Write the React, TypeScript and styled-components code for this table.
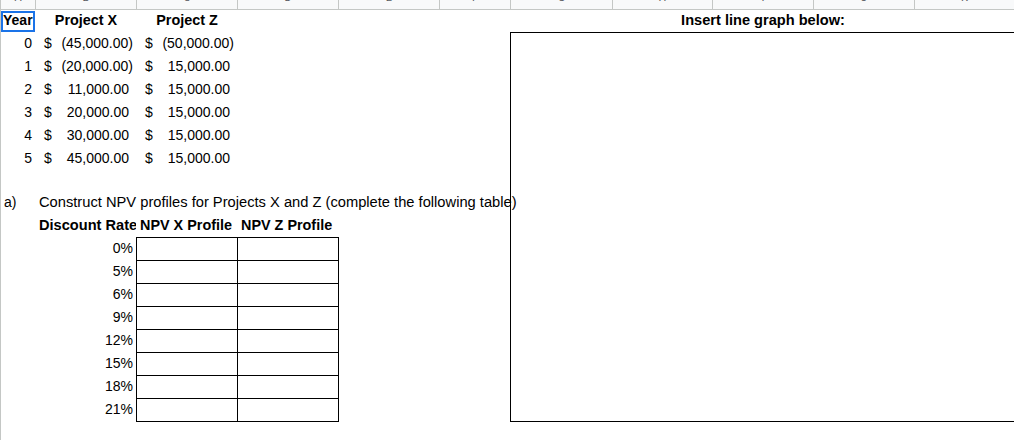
import React from "react";
import styled, { createGlobalStyle, css } from "styled-components";

const GlobalStyle = createGlobalStyle`
  html, body { margin: 0; padding: 0; background: #ffffff; }
  body { font-family: "Liberation Sans", Arial, sans-serif; color: #000; }
`;

const COLS = "34px 101px 101px 101px 101px 71px 102px 100px 101px 101px 100px";
const GRID_LINE = "#c4c7c5";

const Page = styled.div`
  width: 1014px;
  height: 440px;
  overflow: hidden;
  display: flex;
  flex-direction: column;
  background: #fff;
`;

const ColumnHeader = styled.div`
  display: grid;
  grid-template-columns: ${COLS};
  height: 9px;
  flex: none;
  background: #f8f9fa;
  border-bottom: 1px solid ${GRID_LINE};
  border-left: 1px solid ${GRID_LINE};
  overflow: hidden;
`;

const HeaderCell = styled.div<{ $first?: boolean }>`
  display: flex;
  justify-content: center;
  overflow: hidden;
  border-left: ${(p) => (p.$first ? "none" : `1px solid ${GRID_LINE}`)};
`;

const HeaderLabel = styled.span`
  font-family: Roboto, "Liberation Sans", Arial, sans-serif;
  font-size: 11px;
  line-height: 11px;
  margin-top: -8px;
  color: #575a5e;
`;

const Grid = styled.div`
  flex: 1;
  display: grid;
  grid-template-columns: ${COLS};
  grid-template-rows: 22px repeat(6, 23px) 21px repeat(10, 23px) 1fr;
  border-left: 1px solid ${GRID_LINE};
`;

type Align = "left" | "right" | "center";

const Cell = styled.div<{
  $col: string;
  $row: string;
  $align?: Align;
  $bold?: boolean;
  $clip?: boolean;
  $size?: number;
  $padLeft?: number;
}>`
  grid-column: ${(p) => p.$col};
  grid-row: ${(p) => p.$row};
  position: relative;
  display: flex;
  align-items: flex-end;
  justify-content: ${(p) =>
    p.$align === "right" ? "flex-end" : p.$align === "center" ? "center" : "flex-start"};
  padding: 0 3px 3px ${(p) => p.$padLeft ?? 4}px;
  min-width: 0;
  white-space: nowrap;
  font-size: ${(p) => p.$size ?? (p.$bold ? 14.4 : 14)}px;
  line-height: 17px;
  font-weight: ${(p) => (p.$bold ? 700 : 400)};
  overflow: ${(p) => (p.$clip ? "hidden" : "visible")};
  z-index: 1;
`;

const Selection = styled.div`
  position: absolute;
  top: 1px;
  left: 0;
  right: 0;
  bottom: 0;
  border: 2px solid #1a73e8;
  pointer-events: none;
`;

const Money = styled.div<{ $col: string; $row: string }>`
  grid-column: ${(p) => p.$col};
  grid-row: ${(p) => p.$row};
  display: flex;
  align-items: flex-end;
  justify-content: space-between;
  padding: 0 3px 3px 4px;
  font-size: 14px;
  line-height: 17px;
  white-space: nowrap;
`;

const Dollar = styled.span`
  padding-left: 5px;
`;

const Amount = styled.span<{ $negative: boolean }>`
  ${(p) =>
    !p.$negative &&
    css`
      padding-right: 4px;
    `}
`;

const ChartBox = styled.div`
  grid-column: 7 / -1;
  grid-row: 2 / 19;
  margin-bottom: -1px;
  border: 1px solid #000;
  border-right: none;
  background: transparent;
`;

const NpvTable = styled.div`
  grid-column: 3 / 5;
  grid-row: 11 / 19;
  margin-right: -1px;
  margin-bottom: -1px;
  display: grid;
  grid-template-columns: repeat(2, 101px);
  grid-template-rows: repeat(8, 23px);
  border-left: 1px solid #000;
  border-top: 1px solid #000;
  z-index: 2;
`;

const TableCell = styled.div`
  border-right: 1px solid #000;
  border-bottom: 1px solid #000;
  background: #fff;
`;

const columnLetters = ["A", "B", "C", "D", "E", "F", "G", "H", "I", "J", "K"];

const cashFlows: { year: number; x: number; z: number }[] = [
  { year: 0, x: -45000, z: -50000 },
  { year: 1, x: -20000, z: 15000 },
  { year: 2, x: 11000, z: 15000 },
  { year: 3, x: 20000, z: 15000 },
  { year: 4, x: 30000, z: 15000 },
  { year: 5, x: 45000, z: 15000 },
];

const rates = ["0%", "5%", "6%", "9%", "12%", "15%", "18%", "21%"];

const fmt = (v: number) => {
  const s = Math.abs(v).toLocaleString("en-US", {
    minimumFractionDigits: 2,
    maximumFractionDigits: 2,
  });
  return v < 0 ? `(${s})` : s;
};

const MoneyCell: React.FC<{ col: string; row: string; value: number }> = ({
  col,
  row,
  value,
}) => (
  <Money $col={col} $row={row}>
    <Dollar>$</Dollar>
    <Amount $negative={value < 0}>{fmt(value)}</Amount>
  </Money>
);

export default function App() {
  return (
    <Page>
      <GlobalStyle />
      <ColumnHeader>
        {columnLetters.map((l, i) => (
          <HeaderCell key={l} $first={i === 0}>
            <HeaderLabel>{l}</HeaderLabel>
          </HeaderCell>
        ))}
      </ColumnHeader>
      <Grid>
        <Cell $col="1" $row="1" $bold $size={14} $padLeft={2}>
          Year
          <Selection />
        </Cell>
        <Cell $col="2" $row="1" $bold $align="center">
          Project X
        </Cell>
        <Cell $col="3" $row="1" $bold $align="center">
          Project Z
        </Cell>
        <Cell $col="9" $row="1" $bold $align="center" $size={14.6}>
          Insert line graph below:
        </Cell>

        {cashFlows.map((r, i) => {
          const row = String(i + 2);
          return (
            <React.Fragment key={r.year}>
              <Cell $col="1" $row={row} $align="right">
                {r.year}
              </Cell>
              <MoneyCell col="2" row={row} value={r.x} />
              <MoneyCell col="3" row={row} value={r.z} />
            </React.Fragment>
          );
        })}

        <Cell $col="1" $row="9" $padLeft={3}>
          a)
        </Cell>
        <Cell $col="2" $row="9" $size={14.7}>
          Construct NPV profiles for Projects X and Z (complete the following table)
        </Cell>

        <Cell $col="2" $row="10" $bold $clip $size={14.6}>
          Discount Rate
        </Cell>
        <Cell $col="3" $row="10" $bold>
          NPV X Profile
        </Cell>
        <Cell $col="4" $row="10" $bold>
          NPV Z Profile
        </Cell>

        {rates.map((rate, i) => (
          <Cell key={rate} $col="2" $row={String(i + 11)} $align="right">
            {rate}
          </Cell>
        ))}

        <NpvTable>
          {rates.map((rate) => (
            <React.Fragment key={rate}>
              <TableCell />
              <TableCell />
            </React.Fragment>
          ))}
        </NpvTable>

        <ChartBox />
      </Grid>
    </Page>
  );
}
